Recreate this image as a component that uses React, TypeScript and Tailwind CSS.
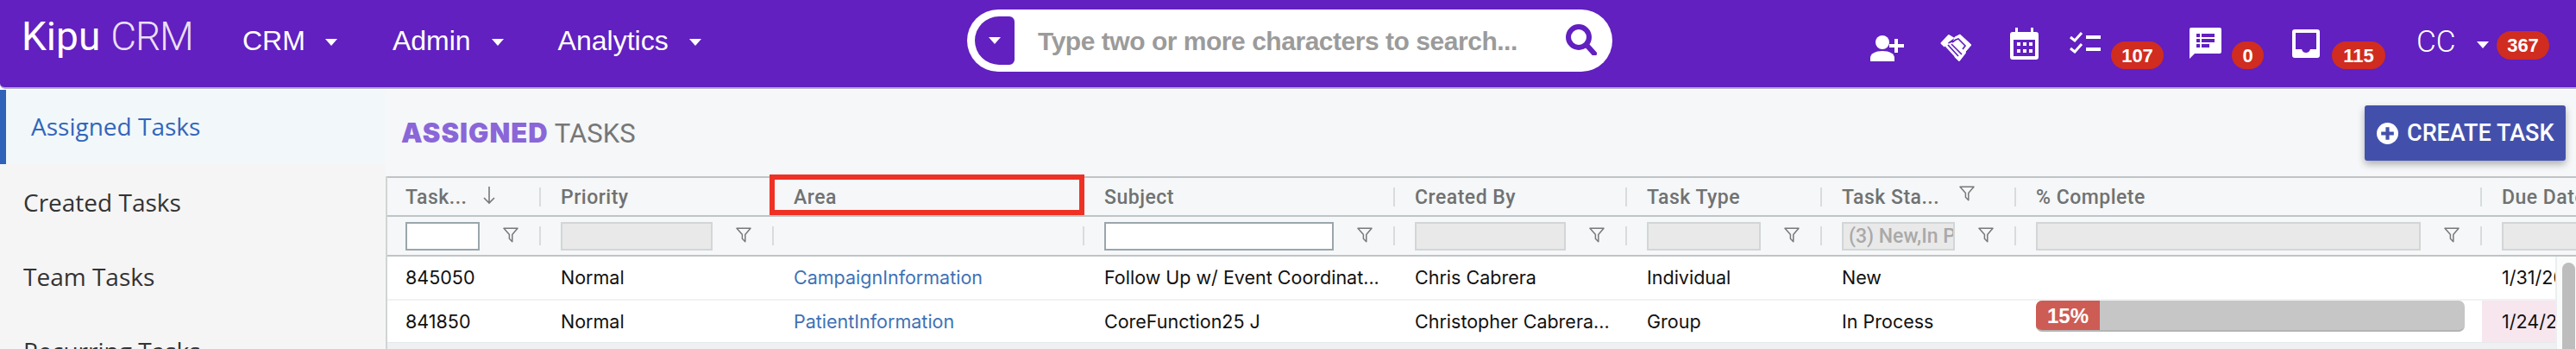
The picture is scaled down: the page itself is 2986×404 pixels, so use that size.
const COLUMNS = [
  { title: 'Task...', width: 'w-[180px]', filter: 'text', sort: true },
  { title: 'Priority', width: 'w-[270px]', filter: 'disabled' },
  { title: 'Area', width: 'w-[360px]', filter: 'none', marked: true },
  { title: 'Subject', width: 'w-[360px]', filter: 'text' },
  { title: 'Created By', width: 'w-[269px]', filter: 'disabled' },
  { title: 'Task Type', width: 'w-[226px]', filter: 'disabled' },
  { title: 'Task Sta...', width: 'w-[225px]', filter: 'status', funnel: true },
  { title: '% Complete', width: 'w-[540px]', filter: 'disabled' },
  { title: 'Due Date', width: 'w-[240px]', filter: 'disabled', last: true },
];

const ROWS = [
  ['845050', 'Normal', 'CampaignInformation', 'Follow Up w/ Event Coordinat...', 'Chris Cabrera', 'Individual', 'New', null, '1/31/2025'],
  ['841850', 'Normal', 'PatientInformation', 'CoreFunction25 J', 'Christopher Cabrera...', 'Group', 'In Process', 15, '1/24/2025'],
];

function Caret({ className = '' }: { className?: string }) {
  return (
    <svg viewBox="0 0 14 8" className={`w-[14px] h-[8px] shrink-0 ${className}`}>
      <path d="M0 0h14L7 8z" fill="#fff" />
    </svg>
  );
}

function Funnel({ className = '' }: { className?: string }) {
  return (
    <svg viewBox="0 0 18 18" className={`w-[18px] h-[18px] shrink-0 ${className}`}>
      <path d="M1 1.2h16l-6.2 7.4v8.2l-3.4-3.6V8.6z" fill="none" stroke="#77797a" strokeWidth="1.5" strokeLinejoin="round" />
    </svg>
  );
}

function Badge({ value, className = '' }: { value: string; className?: string }) {
  return (
    <span className={`flex items-center justify-center rounded-full bg-[#d02c1f] text-white font-bold text-[22px] shrink-0 ${className}`}>
      {value}
    </span>
  );
}

function NavItem({ label, gap }: { label: string; gap: string }) {
  return (
    <div className="flex items-center">
      <span className="text-[32px] leading-[40px] text-white">{label}</span>
      <Caret className={gap} />
    </div>
  );
}

function Header() {
  return (
    <header className="flex items-start h-[103px] shrink-0 bg-[#6120bf] border-b-2 border-[#b9aed0] rounded-bl-[6px] font-['Liberation_Sans',sans-serif]">
      {/* Logo and menus */}
      <div className="flex items-start w-[1121px] shrink-0">
        <div className="flex items-baseline ml-[25px] mt-[15px] text-white leading-[54px] w-[256px] shrink-0">
          <span className="text-[46px] font-['Roboto',sans-serif] font-normal">Kipu</span>
          <span className="text-[46px] ml-[12px] font-['Roboto',sans-serif] font-light text-[#ebdff8] tracking-[-1.2px]">CRM</span>
        </div>
        <div className="flex items-center mt-[27px]">
          <NavItem label="CRM" gap="ml-[23px] mt-[3px]" />
          <div className="ml-[64px]"><NavItem label="Admin" gap="ml-[24px] mt-[3px]" /></div>
          <div className="ml-[63px]"><NavItem label="Analytics" gap="ml-[24px] mt-[3px]" /></div>
        </div>
      </div>

      {/* Search */}
      <div className="flex items-center w-[748px] h-[72px] mt-[11px] shrink-0 rounded-[36px] bg-white pl-[9px] pr-[18px]">
        <div className="flex items-center justify-center w-[46px] h-[56px] rounded-l-[28px] rounded-r-[6px] bg-[#6120bf]">
          <Caret />
        </div>
        <span className="ml-[27px] flex-1 text-[30px] font-bold text-[#9b9b9b] tracking-[-0.47px] whitespace-nowrap">
          Type two or more characters to search...
        </span>
        <svg viewBox="0 0 36 36" className="w-[36px] h-[36px] mt-[-3px] shrink-0">
          <circle cx="15" cy="15" r="12" fill="none" stroke="#6120bf" strokeWidth="6" />
          <path d="M24 24l9 10" stroke="#6120bf" strokeWidth="6" strokeLinecap="round" />
        </svg>
      </div>

      {/* Shortcuts */}
      <div className="flex items-start text-white">
        <svg viewBox="0 0 40 30" className="w-[40px] h-[30px] ml-[299px] mt-[41px] shrink-0" fill="#fff">
          <circle cx="14" cy="8" r="8" />
          <path d="M0 30v-4c0-5 6-8 14-8s14 3 14 8v4z" />
          <path d="M28 4h4v6h7v4h-7v6h-4v-6h-6v-4h6z" />
        </svg>
        <svg viewBox="0 0 37 33" className="w-[37px] h-[33px] ml-[41px] mt-[39px] shrink-0">
          <path d="M1.5 11L10 2l5 3-7 5 1 3 5-2 3-1 12 12-7 9z" fill="#fff" stroke="#fff" strokeWidth="2" strokeLinejoin="round" />
          <path d="M17 4l6-3 13 12-7 8L18 10l-4 3z" fill="#fff" stroke="#fff" strokeWidth="1" strokeLinejoin="round" />
          <path d="M5 15l11 12M9 13l12 13M13 12l12 12M14 10l4-3 3-1 8 8-3 4" fill="none" stroke="#6120bf" strokeWidth="1.7" />
        </svg>
        <svg viewBox="0 0 33 37" className="w-[33px] h-[37px] ml-[44px] mt-[32px] shrink-0" fill="#fff">
          <path d="M6 0h3v5h15V0h3v5h3a3 3 0 0 1 3 3v26a3 3 0 0 1-3 3H3a3 3 0 0 1-3-3V8a3 3 0 0 1 3-3h3z" />
          <path d="M4 14h25v19H4z" fill="#6120bf" />
          <path d="M8 17h4v4H8zM15 17h4v4h-4zM22 17h4v4h-4zM8 25h4v4H8zM15 25h4v4h-4zM22 25h4v4h-4z" />
        </svg>
        <svg viewBox="0 0 36 26" className="w-[36px] h-[26px] ml-[36px] mt-[36px] shrink-0">
          <path d="M1 7l5 4 8-9M1 20l5 4 8-9" fill="none" stroke="#fff" strokeWidth="3" />
          <path d="M19 5h17v4H19zM19 19h17v4H19z" fill="#fff" />
        </svg>
        <Badge value="107" className="w-[61px] h-[32px] ml-[12px] mt-[48px]" />
        <svg viewBox="0 0 37 36" className="w-[37px] h-[36px] ml-[30px] mt-[32px] shrink-0" fill="#fff">
          <path d="M2 0h33a2 2 0 0 1 2 2v26a2 2 0 0 1-2 2H6l-6 6V2a2 2 0 0 1 2-2z" />
          <path d="M8 7h4v4H8zM14 7h15v4H14zM8 13h4v4H8zM14 13h15v4H14zM8 19h4v4H8zM14 19h9v4h-9z" fill="#6120bf" />
        </svg>
        <Badge value="0" className="w-[37px] h-[32px] ml-[12px] mt-[48px]" />
        <svg viewBox="0 0 32 33" className="w-[32px] h-[33px] ml-[33px] mt-[34px] shrink-0">
          <rect width="32" height="33" rx="3" fill="#fff" />
          <path d="M4 4h24v19h-7c-1 3-3 4-5 4s-4-1-5-4H4z" fill="#6120bf" />
        </svg>
        <Badge value="115" className="w-[62px] h-[32px] ml-[14px] mt-[48px]" />
        <span className="ml-[36px] mt-[28px] w-[46px] text-[35px] leading-[42px] font-['Roboto',sans-serif] font-light shrink-0">CC</span>
        <Caret className="ml-[24px] mt-[48px]" />
        <Badge value="367" className="w-[61px] h-[33px] ml-[9px] mt-[36px]" />
      </div>
    </header>
  );
}

function Sidebar() {
  return (
    <aside className="w-[447px] shrink-0 bg-[#f5f5f5] text-[28px] font-['Open_Sans',sans-serif] text-[#333]">
      <div className="flex items-center h-[86px] pb-[3px] border-l-[7px] border-[#2f62b8] bg-[#f2f8fa] pl-[29px] text-[#3366bb]">Assigned Tasks</div>
      <div className="flex items-center h-[87px] pl-[27px]">Created Tasks</div>
      <div className="flex items-center h-[86px] pl-[27px]">Team Tasks</div>
      <div className="flex items-center h-[86px] pl-[27px]">Recurring Tasks</div>
    </aside>
  );
}

function FilterControl({ kind }: { kind: string }) {
  if (kind === 'none') return <div className="flex-1" />;
  if (kind === 'text') {
    return <div className="flex-1 min-w-0 h-[33px] bg-white border-2 border-[#9aa6ac]" />;
  }
  return (
    <div className="flex-1 min-w-0 h-[33px] bg-[#e9e9e9] border-2 border-[#d3d6d6] overflow-hidden whitespace-nowrap pl-[6px] text-[23px] leading-[29px] font-medium text-[#a9a9a9]">
      {kind === 'status' ? '(3) New,In P' : ''}
    </div>
  );
}

function TableHead() {
  return (
    <div className="font-['Roboto',sans-serif]">
      <div className="flex h-[47px] border-y-2 border-[#bfc4c6]">
        {COLUMNS.map((col) => (
          <div key={col.title} className={`${col.width} shrink-0 relative flex items-center pl-[23px] pt-[3px] text-[23px] font-medium tracking-[0.5px] text-[#707272]`}>
            <span className="whitespace-nowrap">{col.title}</span>
            {col.sort && (
              <svg viewBox="0 0 16 22" className="w-[16px] h-[22px] ml-[18px] mt-[-6px]">
                <path d="M8 1v19M2 14l6 6 6-6" fill="none" stroke="#77797a" strokeWidth="1.6" />
              </svg>
            )}
            {col.funnel && <Funnel className="ml-[23px] mt-[-10px]" />}
            {!col.last && !col.marked && <span className="absolute right-0 top-[11px] w-[2px] h-[22px] bg-[#d9dcdd]" />}
            {col.marked && <span className="absolute left-[-5px] right-0 top-[-4px] bottom-0 border-[6px] border-[#ee3124]" />}
          </div>
        ))}
      </div>
      <div className="flex h-[46px] border-b-2 border-[#bfc4c6]">
        {COLUMNS.map((col) => (
          <div key={col.title} className={`${col.width} shrink-0 relative flex items-center pl-[23px] pr-[71px]`}>
            <FilterControl kind={col.filter} />
            {col.filter !== 'none' && <Funnel className="absolute right-[26px] top-[12px]" />}
            {!col.last && <span className="absolute right-0 top-[11px] w-[2px] h-[22px] bg-[#d9dcdd]" />}
          </div>
        ))}
      </div>
    </div>
  );
}

function TableBody() {
  return (
    <div className="relative flex-1 bg-[#eef0f1] font-['Inter',sans-serif] text-[21.5px] text-[#111]">
      {ROWS.map((row, rowIndex) => (
        <div key={rowIndex} className={`flex bg-white ${rowIndex === 0 ? 'h-[51px] border-b-2 border-[#f0f2f3]' : 'h-[49px] border-b border-[#e6e9ea]'}`}>
          {row.map((cell, i) => {
            const col = COLUMNS[i];
            if (i === 7) {
              return (
                <div key={i} className={`${col.width} shrink-0 pl-[23px] pr-[20px]`}>
                  {cell !== null && (
                    <div className="h-[36px] rounded-[7px] overflow-hidden bg-[#c6c6c6] border-b-2 border-[#b4b4b4]">
                      <div className="flex items-center justify-center w-[74px] h-[36px] bg-[#cd5c55] text-white font-bold text-[24px] font-['Liberation_Sans',sans-serif]">{cell}%</div>
                    </div>
                  )}
                </div>
              );
            }
            return (
              <div
                key={i}
                className={`${col.width} shrink-0 flex items-center pl-[23px] whitespace-nowrap ${i === 2 ? 'text-[#3f72b5]' : ''} ${i === 8 && rowIndex === 1 ? 'bg-[#f7e6ee]' : ''}`}
              >
                {cell}
              </div>
            );
          })}
        </div>
      ))}
      {/* Scrollbar */}
      <div className="absolute top-0 bottom-0 right-0 w-[24px] bg-[#fafbfb] border-l-2 border-[#eceeef] pt-[7px] pl-[6px]">
        <div className="w-[15px] h-[120px] rounded-full bg-[#bdbdbd]" />
      </div>
    </div>
  );
}

export default function App() {
  return (
    <div className="flex flex-col w-[2986px] h-[404px] overflow-hidden bg-white">
      <Header />
      <div className="flex flex-1 min-h-0 mt-[1px]">
        <Sidebar />
        <main className="flex flex-col flex-1 min-w-0 bg-[#f5f7f8] overflow-hidden">
          <div className="flex items-center justify-between h-[100px] shrink-0 pl-[18px] pr-[12px]">
            <h1 className="text-[31px] mt-[2px] font-['Roboto',sans-serif] text-[#777]">
              <span className="font-black font-['Inter',sans-serif] tracking-[1px] text-[#8a66d8]">ASSIGNED</span> TASKS
            </h1>
            <button className="flex items-center w-[233px] h-[64px] pl-[14px] rounded-[3px] bg-[#4350ab] text-white text-[27px] font-medium font-['Roboto',sans-serif] shadow-[0_4px_8px_rgba(0,0,0,0.3)]">
              <svg viewBox="0 0 24 24" className="w-[25px] h-[25px] mr-[10px] shrink-0">
                <circle cx="12" cy="12" r="12" fill="#fff" />
                <path d="M10 5h4v5h5v4h-5v5h-4v-5H5v-4h5z" fill="#4350ab" />
              </svg>
              CREATE TASK
            </button>
          </div>
          <div className="relative flex flex-col flex-1 min-h-0">
            <span className="absolute left-0 top-0 bottom-0 w-[2px] z-10 bg-[#d0d4d6]" />
            <TableHead />
            <TableBody />
          </div>
        </main>
      </div>
    </div>
  );
}
